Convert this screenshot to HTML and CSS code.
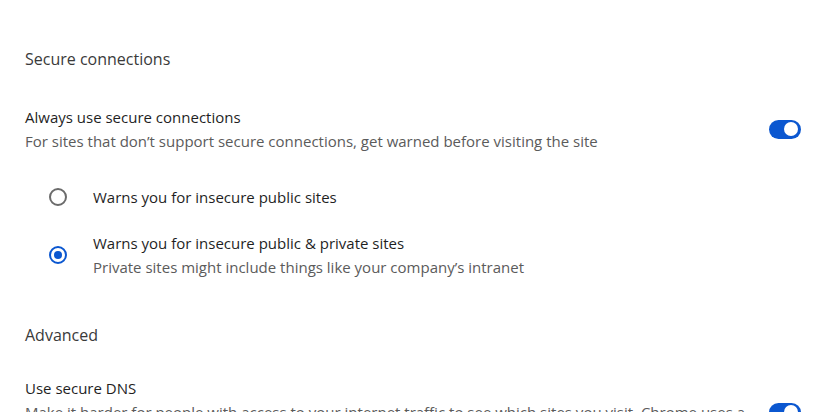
FILE: index.html
```html
<!DOCTYPE html>
<html>
<head>
<meta charset="utf-8">
<link rel="stylesheet" href="styles.css">
</head>
<body>
<main class="page">
  <h2 class="section-title">Secure connections</h2>
  <div class="row">
    <div class="text">
      <div class="label">Always use secure connections</div>
      <div class="desc">For sites that don’t support secure connections, get warned before visiting the site</div>
    </div>
    <div class="toggle on"><span class="knob"></span></div>
  </div>
  <div class="radios">
    <div class="radio-row">
      <span class="radio"></span>
      <div class="text">
        <div class="label">Warns you for insecure public sites</div>
      </div>
    </div>
    <div class="radio-row">
      <span class="radio checked"></span>
      <div class="text">
        <div class="label">Warns you for insecure public &amp; private sites</div>
        <div class="desc">Private sites might include things like your company’s intranet</div>
      </div>
    </div>
  </div>
  <h2 class="section-title advanced">Advanced</h2>
  <div class="row dns">
    <div class="text">
      <div class="label">Use secure DNS</div>
      <div class="desc">Make it harder for people with access to your internet traffic to see which sites you visit. Chrome uses a secure connection to look up a site’s IP address in the DNS (Domain Name System).</div>
    </div>
    <div class="toggle on"><span class="knob"></span></div>
  </div>
</main>
</body>
</html>
```
FILE: styles.css
```css
* { box-sizing: border-box; }
html, body { margin: 0; background: #fff; }
body {
  font-family: "Open Sans", "Noto Sans", sans-serif;
  font-size: 15px;
  line-height: 24px;
  color: #202124;
}
.page {
  padding: 47px 24px 0 25px;
  overflow: hidden;
  height: 412px;
}
.section-title {
  margin: 0;
  font-size: 16px;
  font-weight: 400;
  line-height: 24px;
  color: #3a3a3a;
}
.row {
  display: flex;
  align-items: center;
  margin-top: 34px;
}
.row .text { flex: 1; padding-right: 14px; }
.label { color: #1f1f1f; }
.desc { color: #5b5b5b; }
.toggle {
  width: 32px;
  height: 19px;
  border-radius: 10px;
  background: #0b57d0;
  position: relative;
  flex: none;
}
.knob {
  position: absolute;
  right: 3px;
  top: 2.5px;
  width: 14px;
  height: 14px;
  border-radius: 50%;
  background: #fff;
}
.radios {
  margin-top: 32px;
  padding-left: 24px;
  display: flex;
  flex-direction: column;
  gap: 22px;
}
.radio-row {
  display: flex;
  align-items: center;
  gap: 26px;
}
.radio {
  width: 18px;
  height: 18px;
  border-radius: 50%;
  border: 2px solid #6b6b6b;
  flex: none;
  position: relative;
}
.radio.checked { border-color: #0b57d0; }
.radio.checked::after {
  content: "";
  position: absolute;
  left: 3px; top: 3px;
  width: 8px; height: 8px;
  border-radius: 50%;
  background: #0b57d0;
}
.advanced { margin-top: 44px; }
.dns { margin-top: 29px; }
```
